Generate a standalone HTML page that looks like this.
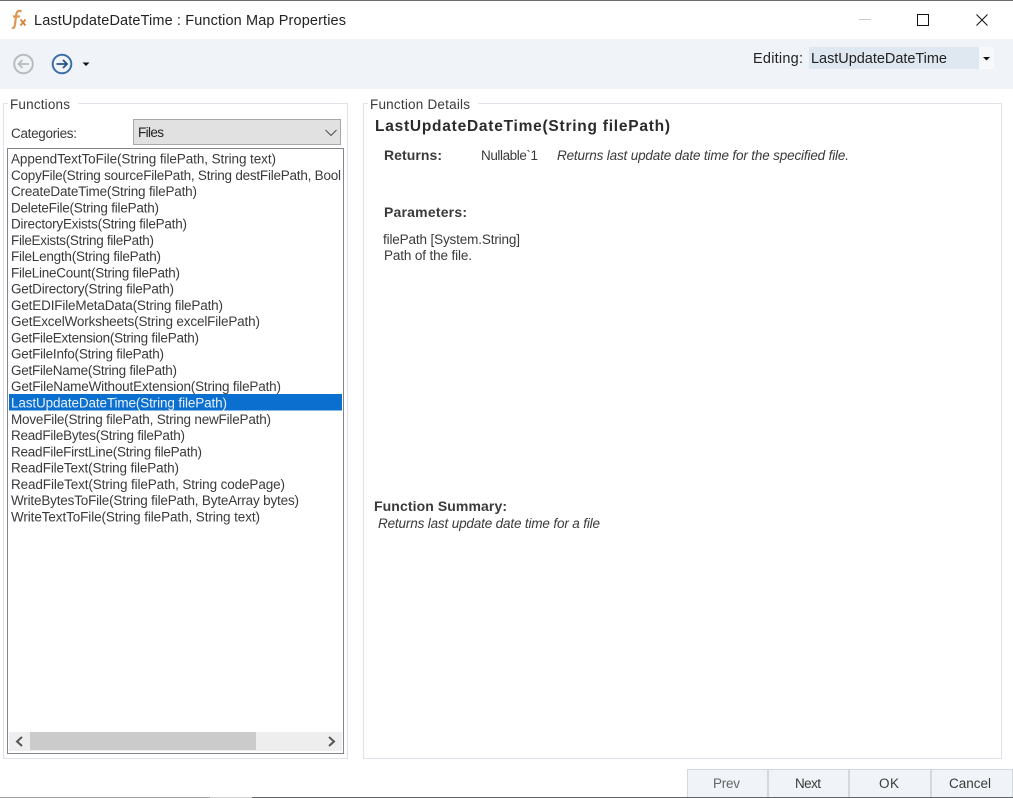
<!DOCTYPE html>
<html><head><meta charset="utf-8"><title>LastUpdateDateTime : Function Map Properties</title>
<style>
html,body{margin:0;padding:0;background:#fff;width:1013px;height:798px;overflow:hidden}
svg{display:block}
text{font-family:"Liberation Sans",sans-serif;font-size:13.5px;fill:#3a3a3a}
.soft{filter:blur(.3px)}
.t{font-size:14.5px;fill:#222}
.b{font-weight:bold;font-size:14px}
.i{font-style:italic}
</style></head><body>
<svg width="1013" height="798" viewBox="0 0 1013 798" xmlns="http://www.w3.org/2000/svg">
<rect width="1013" height="798" fill="#fff"/>
<rect width="1013" height="1" fill="#6b6b6b"/>
<!-- toolbar -->
<rect x="0" y="39" width="1013" height="50" fill="#f0f4f8"/>
<rect x="809" y="47" width="170" height="22" fill="#dfe8f0"/>
<rect x="979" y="47" width="15" height="22" fill="#f6f8fa"/>
<!-- title bar controls -->
<rect x="859" y="19" width="12" height="1" fill="#c8c8c8"/>
<rect x="917.5" y="14.5" width="11" height="11" fill="none" stroke="#111" stroke-width="1"/>
<path d="M976.5 14.5L987.5 25.5M987.5 14.5L976.5 25.5" stroke="#111" stroke-width="1" fill="none"/>
<!-- Functions group -->
<path d="M8 103.5H3.5V758.5H347.5V103.5H78" fill="none" stroke="#dfe3e9" stroke-width="1"/>
<rect x="133.5" y="119.5" width="207" height="25" fill="#e1e1e1" stroke="#a8a8a8"/>
<path d="M325.5 130L331 135.5L336.5 130" fill="none" stroke="#555" stroke-width="1.1"/>
<rect x="7.5" y="148.5" width="336" height="605" fill="#fff" stroke="#82858a"/>
<rect x="9" y="394" width="333" height="16.5" fill="#0b6fd0"/>
<rect x="9" y="732" width="333" height="19" fill="#eeeeee"/>
<rect x="30" y="732" width="226" height="18" fill="#cbcbcb"/>
<path d="M22 737L17 741.5L22 746" fill="none" stroke="#555" stroke-width="2"/>
<path d="M329 737L334 741.5L329 746" fill="none" stroke="#555" stroke-width="2"/>
<!-- Details group -->
<path d="M368 103.5H363.5V758.5H1001.5V103.5H478" fill="none" stroke="#dfe3e9" stroke-width="1"/>
<!-- Buttons -->
<g fill="#f0f4f8" stroke="#d3d8dd">
<rect x="687.5" y="769.5" width="80" height="28"/>
<rect x="768.5" y="769.5" width="80" height="28"/>
<rect x="849.5" y="769.5" width="81" height="28"/>
<rect x="931.5" y="769.5" width="81" height="28"/>
</g>
<!-- Bottom edge -->
<rect x="252" y="797" width="761" height="1" fill="#5f6468"/>
<rect x="0" y="797" width="210" height="1" fill="#a0a0a0"/>
<rect x="210" y="797" width="42" height="1" fill="#cfcfcf"/>
<g class="soft">
<!-- icons -->
<path d="M21.5 11.5C18 9.5 16.5 12 16 16L15 24.5C14.5 28 13.5 28.5 12 27.5M13 16.5H20" fill="none" stroke="#d99a55" stroke-width="2.2"/>
<path d="M20.5 19.5L25.5 25.5M25.5 19.5L20.5 25.5" fill="none" stroke="#d9833c" stroke-width="1.8"/>
<circle cx="23.5" cy="64" r="9.3" fill="none" stroke="#b9bbbd" stroke-width="2"/>
<path d="M29 64H18.5M22.5 60L18.5 64L22.5 68" fill="none" stroke="#b9bbbd" stroke-width="1.8"/>
<circle cx="62" cy="64" r="9.3" fill="none" stroke="#3d6ea8" stroke-width="2"/>
<path d="M56.5 64H67M63 60L67 64L63 68" fill="none" stroke="#24528c" stroke-width="1.8"/>
<path d="M82.5 62.5H89.5L86 66Z" fill="#111"/>
<path d="M983 57H990L986.5 60.5Z" fill="#111"/>
<!-- text -->
<text class="t" x="34" y="25" textLength="312" lengthAdjust="spacing">LastUpdateDateTime : Function Map Properties</text>
<text class="t" x="753" y="63" textLength="50" lengthAdjust="spacing">Editing:</text>
<text class="t" x="811" y="63" textLength="136" lengthAdjust="spacing">LastUpdateDateTime</text>
<text x="10" y="109" textLength="60" lengthAdjust="spacing">Functions</text>
<text x="11" y="138" textLength="66" lengthAdjust="spacing">Categories:</text>
<text x="138" y="137" textLength="26" lengthAdjust="spacing" style="fill:#222">Files</text>
<text x="11" y="163.5" textLength="265" lengthAdjust="spacing">AppendTextToFile(String filePath, String text)</text>
<text x="11" y="179.8" textLength="330" lengthAdjust="spacing">CopyFile(String sourceFilePath, String destFilePath, Bool</text>
<text x="11" y="196" textLength="186" lengthAdjust="spacing">CreateDateTime(String filePath)</text>
<text x="11" y="212.3" textLength="148" lengthAdjust="spacing">DeleteFile(String filePath)</text>
<text x="11" y="228.6" textLength="176" lengthAdjust="spacing">DirectoryExists(String filePath)</text>
<text x="11" y="244.8" textLength="143" lengthAdjust="spacing">FileExists(String filePath)</text>
<text x="11" y="261.1" textLength="150" lengthAdjust="spacing">FileLength(String filePath)</text>
<text x="11" y="277.4" textLength="169" lengthAdjust="spacing">FileLineCount(String filePath)</text>
<text x="11" y="293.6" textLength="163" lengthAdjust="spacing">GetDirectory(String filePath)</text>
<text x="11" y="309.9" textLength="212" lengthAdjust="spacing">GetEDIFileMetaData(String filePath)</text>
<text x="11" y="326.2" textLength="249" lengthAdjust="spacing">GetExcelWorksheets(String excelFilePath)</text>
<text x="11" y="342.4" textLength="188" lengthAdjust="spacing">GetFileExtension(String filePath)</text>
<text x="11" y="358.7" textLength="153" lengthAdjust="spacing">GetFileInfo(String filePath)</text>
<text x="11" y="375" textLength="166" lengthAdjust="spacing">GetFileName(String filePath)</text>
<text x="11" y="391.2" textLength="270" lengthAdjust="spacing">GetFileNameWithoutExtension(String filePath)</text>
<text x="11" y="407.5" textLength="216" lengthAdjust="spacing" style="fill:#e8f1fb">LastUpdateDateTime(String filePath)</text>
<text x="11" y="423.8" textLength="260" lengthAdjust="spacing">MoveFile(String filePath, String newFilePath)</text>
<text x="11" y="440" textLength="174" lengthAdjust="spacing">ReadFileBytes(String filePath)</text>
<text x="11" y="456.3" textLength="191" lengthAdjust="spacing">ReadFileFirstLine(String filePath)</text>
<text x="11" y="472.6" textLength="168" lengthAdjust="spacing">ReadFileText(String filePath)</text>
<text x="11" y="488.8" textLength="274" lengthAdjust="spacing">ReadFileText(String filePath, String codePage)</text>
<text x="11" y="505.1" textLength="288" lengthAdjust="spacing">WriteBytesToFile(String filePath, ByteArray bytes)</text>
<text x="11" y="521.4" textLength="249" lengthAdjust="spacing">WriteTextToFile(String filePath, String text)</text>
<text x="370" y="109" textLength="100" lengthAdjust="spacing">Function Details</text>
<text class="b" x="375" y="131" textLength="295" lengthAdjust="spacing" style="font-size:15.5px;fill:#2b2b2b">LastUpdateDateTime(String filePath)</text>
<text class="b" x="384" y="160" textLength="58" lengthAdjust="spacing">Returns:</text>
<text x="481" y="160" textLength="57" lengthAdjust="spacing">Nullable`1</text>
<text class="i" x="557" y="160" textLength="292" lengthAdjust="spacing">Returns last update date time for the specified file.</text>
<text class="b" x="384" y="217" textLength="83" lengthAdjust="spacing">Parameters:</text>
<text x="383" y="244" textLength="137" lengthAdjust="spacing">filePath [System.String]</text>
<text x="384" y="260" textLength="88" lengthAdjust="spacing">Path of the file.</text>
<text class="b" x="374" y="511" textLength="133" lengthAdjust="spacing">Function Summary:</text>
<text class="i" x="378" y="528" textLength="222" lengthAdjust="spacing">Returns last update date time for a file</text>
<text x="713" y="788" textLength="27" lengthAdjust="spacing" style="fill:#666">Prev</text>
<text x="795" y="788" textLength="26" lengthAdjust="spacing">Next</text>
<text x="879" y="788" textLength="20" lengthAdjust="spacing">OK</text>
<text x="949" y="788" textLength="42" lengthAdjust="spacing">Cancel</text>
</g>
</svg>
</body></html>
